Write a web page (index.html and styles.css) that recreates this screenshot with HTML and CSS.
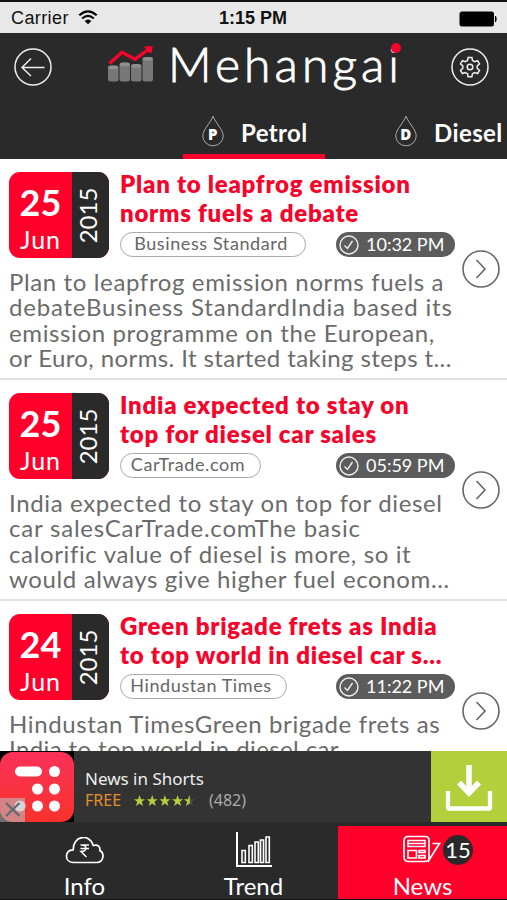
FILE: index.html
```html
<!DOCTYPE html>
<html lang="en">
<head>
    <meta charset="UTF-8">
    <title>Mehangai</title>
    <meta name="viewport" content="width=device-width, initial-scale=1">
    <link rel="stylesheet" href="styles.css">
</head>
<body>
    <div class="status-bar">
        <div class="carrier">
            <span>Carrier</span>
            <svg width="20" height="15" viewBox="0 0 20 15">
                <path d="M1.3 5.2Q10-2.6 18.7 5.2M4.2 8.5Q10 3.4 15.8 8.5" fill="none" stroke="#000" stroke-width="2.2"/>
                <path d="M6.6 10.9Q10 7.9 13.4 10.9L10 14.3Z"/>
            </svg>
        </div>
        <div class="clock">1:15 PM</div>
        <svg class="battery" width="39" height="16" viewBox="0 0 39 16">
            <rect x=".5" y=".5" width="34.5" height="15" rx="2.5"/>
            <path d="M36 5h1q1.5 3 0 6h-1z"/>
        </svg>
    </div>

    <header class="header">
        <div class="title-bar">
            <svg class="round-icon" width="38" height="38" viewBox="0 0 38 38">
                <circle cx="19" cy="19" r="18"/>
                <path d="M30.5 19.5H8M17 10.5L8 19.5L17 28"/>
            </svg>
            <div class="brand">
                <svg width="46" height="37" viewBox="0 0 46 37">
                    <g fill="#777">
                        <rect x="0" y="20.5" width="10.5" height="16" rx="2.5"/>
                        <rect x="11.5" y="17.5" width="10.5" height="19" rx="2.5"/>
                        <rect x="23" y="19" width="10.5" height="17.5" rx="2.5"/>
                        <rect x="34.5" y="12" width="10.5" height="24.5" rx="2.5"/>
                    </g>
                    <g fill="#909090">
                        <ellipse cx="5.25" cy="22.4" rx="5" ry="1.8"/>
                        <ellipse cx="16.75" cy="19.4" rx="5" ry="1.8"/>
                        <ellipse cx="28.25" cy="20.9" rx="5" ry="1.8"/>
                        <ellipse cx="39.75" cy="13.9" rx="5" ry="1.8"/>
                    </g>
                    <path d="M1.5 18.5L14 7.3L27 14.2L41 4" fill="none" stroke="#f5052b" stroke-width="3.4"/>
                    <path d="M36 1.5L44.5 1L44 7.5L41 8Z" fill="#f5052b"/>
                </svg>
                <div class="logo-text">Mehangai</div>
            </div>
            <svg class="round-icon" width="38" height="38" viewBox="0 0 38 38">
                <circle cx="19" cy="19" r="18"/>
                <circle cx="19" cy="19" r="2.8"/>
                <path d="M17.1 9.5h3.8l.6 3 2.2 1.2 2.9-1 1.9 3.2-2.3 2v2.4l2.3 2-1.9 3.2-2.9-1-2.2 1.2-.6 3h-3.8l-.6-3-2.2-1.2-2.9 1-1.9-3.2 2.3-2v-2.4l-2.3-2 1.9-3.2 2.9 1 2.2-1.2z"/>
            </svg>
        </div>
        <nav class="fuel-tabs">
            <div class="fuel-tab active">
                <svg class="drop" width="22" height="32" viewBox="0 0 22 32">
                    <path d="M11 1.2C8.5 8 .8 14.5.8 21A10.2 9.8 0 0 0 21.2 21C21.2 14.5 13.5 8 11 1.2Z"/>
                    <text x="11" y="25">P</text>
                </svg>
                <span>Petrol</span>
            </div>
            <div class="fuel-tab">
                <svg class="drop" width="22" height="32" viewBox="0 0 22 32">
                    <path d="M11 1.2C8.5 8 .8 14.5.8 21A10.2 9.8 0 0 0 21.2 21C21.2 14.5 13.5 8 11 1.2Z"/>
                    <text x="11" y="25">D</text>
                </svg>
                <span>Diesel</span>
            </div>
        </nav>
    </header>

    <main class="news-list">
        <article class="news">
            <div class="news-main">
                <div class="news-head">
                    <div class="date">
                        <div class="day"><b>25</b><span>Jun</span></div>
                        <div class="year"><span>2015</span></div>
                    </div>
                    <div class="news-info">
                        <h2>Plan to leapfrog emission<br>norms fuels a debate</h2>
                        <div class="meta">
                            <span class="source business">Business Standard</span>
                            <span class="time">
                                <svg width="20" height="20" viewBox="0 0 20 20"><circle cx="10" cy="10" r="9"/><path d="M5.5 10.5L8.5 13.5L13.5 6"/></svg>
                                <span>10:32 PM</span>
                            </span>
                        </div>
                    </div>
                </div>
                <p>Plan to leapfrog emission norms fuels a<br><span class="wide">debateBusiness StandardIndia based its</span><br>emission programme on the European,<br><span class="tight">or Euro, norms. It started taking steps t...</span></p>
            </div>
            <svg class="arrow" width="38" height="38" viewBox="0 0 38 38"><circle cx="19" cy="19" r="18"/><path d="M14.5 10L23 19L14.5 28"/></svg>
        </article>

        <article class="news">
            <div class="news-main">
                <div class="news-head">
                    <div class="date">
                        <div class="day"><b>25</b><span>Jun</span></div>
                        <div class="year"><span>2015</span></div>
                    </div>
                    <div class="news-info">
                        <h2>India expected to stay on<br>top for diesel car sales</h2>
                        <div class="meta">
                            <span class="source cartrade">CarTrade.com</span>
                            <span class="time">
                                <svg width="20" height="20" viewBox="0 0 20 20"><circle cx="10" cy="10" r="9"/><path d="M5.5 10.5L8.5 13.5L13.5 6"/></svg>
                                <span>05:59 PM</span>
                            </span>
                        </div>
                    </div>
                </div>
                <p>India expected to stay on top for diesel<br><span class="wide">car salesCarTrade.comThe basic</span><br>calorific value of diesel is more, so it<br>would always give higher fuel econom...</p>
            </div>
            <svg class="arrow" width="38" height="38" viewBox="0 0 38 38"><circle cx="19" cy="19" r="18"/><path d="M14.5 10L23 19L14.5 28"/></svg>
        </article>

        <article class="news">
            <div class="news-main">
                <div class="news-head">
                    <div class="date">
                        <div class="day"><b>24</b><span>Jun</span></div>
                        <div class="year"><span>2015</span></div>
                    </div>
                    <div class="news-info">
                        <h2>Green brigade frets as India<br>to top world in diesel car s...</h2>
                        <div class="meta">
                            <span class="source hindustan">Hindustan Times</span>
                            <span class="time">
                                <svg width="20" height="20" viewBox="0 0 20 20"><circle cx="10" cy="10" r="9"/><path d="M5.5 10.5L8.5 13.5L13.5 6"/></svg>
                                <span>11:22 PM</span>
                            </span>
                        </div>
                    </div>
                </div>
                <p>Hindustan TimesGreen brigade frets as<br><span class="tight">India to top world in diesel car</span></p>
            </div>
            <svg class="arrow" width="38" height="38" viewBox="0 0 38 38"><circle cx="19" cy="19" r="18"/><path d="M14.5 10L23 19L14.5 28"/></svg>
        </article>
    </main>

    <div class="ad">
        <svg width="74" height="71" viewBox="0 0 74 71">
            <defs>
                <linearGradient id="adRed" x1="0" y1="0" x2="0" y2="1">
                    <stop offset="0" stop-color="#fa3159"/>
                    <stop offset="1" stop-color="#f8322b"/>
                </linearGradient>
            </defs>
            <rect width="74" height="71" fill="#000"/>
            <rect x="0" y="1" width="74" height="70" rx="13" fill="url(#adRed)"/>
            <g fill="#fff">
                <rect x="15" y="15.5" width="27" height="10" rx="5"/>
                <circle cx="54.5" cy="20.5" r="5.5"/>
                <circle cx="37.5" cy="38" r="5.5"/>
                <circle cx="54.5" cy="38" r="5.5"/>
                <circle cx="20" cy="55" r="5.5"/>
                <circle cx="37.5" cy="55" r="5.5"/>
                <circle cx="54.5" cy="55" r="5.5"/>
            </g>
            <rect x="0" y="47" width="25" height="24" fill="#bbb" opacity=".6"/>
            <path d="M6 52L19.5 65M19.5 52L6 65" stroke="#5f6b70" stroke-width="2.2"/>
        </svg>
        <div class="ad-text">
            <div class="ad-name">News in Shorts</div>
            <div class="ad-rating">
                <span class="free">FREE</span>
                <svg width="61" height="12" viewBox="0 0 61 12">
                    <defs>
                        <path id="star" d="M5.5 0L7 4.2H11L7.8 6.8L9 11L5.5 8.5L2 11L3.2 6.8L0 4.2H4Z"/>
                        <clipPath id="half"><rect width="5.8" height="12"/></clipPath>
                    </defs>
                    <g fill="#b3cf3c">
                        <use href="#star"/>
                        <use href="#star" x="12.7"/>
                        <use href="#star" x="25.4"/>
                        <use href="#star" x="38.1"/>
                    </g>
                    <use href="#star" x="50" fill="#4b4b4b"/>
                    <g transform="translate(50 0)"><use href="#star" fill="#b3cf3c" clip-path="url(#half)"/></g>
                </svg>
                <span class="count">(482)</span>
            </div>
        </div>
        <div class="download">
            <svg width="48" height="48" viewBox="0 0 48 48" fill="none" stroke="#fff">
                <path d="M24 1V29" stroke-width="5.5"/>
                <path d="M14 18.5L24 29L34 18.5" stroke-width="5.5"/>
                <path d="M3 27V43.5Q3 44.5 4 44.5H44Q45 44.5 45 43.5V27" stroke-width="4.3"/>
            </svg>
        </div>
    </div>

    <nav class="bottom-nav">
        <div class="nav-item">
            <svg width="40" height="28" viewBox="0 0 40 28" fill="none" stroke="#fff" stroke-width="1.7">
                <path d="M8 25.5C-1 25-.5 12.5 8.2 12.8C8-2 25-3.5 28.3 8.5C33 7 35.5 10 34.8 13.5C40 16 38.5 25.5 32 25.5Z"/>
                <path d="M15.5 8H24M15.5 11.5H24M16 8C22.5 7.5 22.5 14.5 16 14.5L21.5 20" stroke-width="1.5"/>
            </svg>
            <span>Info</span>
        </div>
        <div class="nav-item trend">
            <svg width="36" height="36" viewBox="0 0 36 36" fill="none" stroke="#fff" stroke-width="1.6">
                <path d="M1 0V34H36" stroke-width="2"/>
                <path d="M6 30.5V18.5H9.3V30.5ZM13 30.5V13.5H16.3V30.5ZM19 30.5V10H22.3V30.5ZM24.5 30.5V8H27.5V30.5ZM30 30.5V5H33.3V30.5Z"/>
            </svg>
            <span>Trend</span>
        </div>
        <div class="nav-item news-tab">
            <div class="news-icons">
                <svg width="38" height="28" viewBox="0 0 38 28" fill="none" stroke="#fff" stroke-width="1.7">
                    <path d="M26 7V5Q26 1.5 22 1.5H5.5Q1 1.5 1 6V22Q1 26.5 5.5 26.5H21.5Q26 26.5 26.5 23M26 7V25L36.5 8.5H29.5"/>
                    <path d="M5 5.5H22V11.5H5ZM5 8.5H22" stroke-width="1.5"/>
                    <path d="M5 15.5H13.5V23H5ZM16 15.5H22V17.5H16ZM16 20.5H22V23H16Z" stroke-width="1.6"/>
                </svg>
                <div class="count-badge">15</div>
            </div>
            <span>News</span>
        </div>
    </nav>
</body>
</html>
```
FILE: styles.css
```css
* {
    box-sizing: border-box;
}
body {
    display: flex;
    flex-direction: column;
    width: 507px;
    height: 900px;
    margin: 0;
    overflow: hidden;
    font-family: Lato, "Open Sans", sans-serif;
    background: #fff;
}
svg {
    flex: none;
    display: block;
}
.status-bar {
    display: grid;
    grid-template-columns: 1fr 100px 1fr;
    align-items: center;
    height: 33px;
    padding: 2px 9px 0 11px;
    border-top: 2px solid #111;
    background: #e8e8e8;
    color: #111;
    font: 18px "Liberation Sans", sans-serif;
    flex: none;
}
.carrier {
    display: flex;
    align-items: center;
    gap: 9px;
    letter-spacing: 0.4px;
}
.carrier svg {
    margin-top: -3px;
}
.clock {
    margin-left: -3px;
    font-weight: bold;
    text-align: center;
    white-space: nowrap;
}
.battery {
    justify-self: end;
}
.header {
    flex: none;
    height: 126px;
    background: #2a2a2a;
    color: #fff;
}
.title-bar {
    display: flex;
    justify-content: space-between;
    height: 73px;
    padding: 15px 18px 0 14px;
}
.round-icon {
    fill: none;
    stroke: #eee;
    stroke-width: 1.5;
}
.brand {
    display: flex;
    margin: -3px -6px 0 0;
}
.logo-text {
    position: relative;
    width: 233px;
    margin-left: 14px;
    font-size: 48px;
    font-weight: 300;
    letter-spacing: 4.1px;
    line-height: 50px;
    margin-top: -6px;
    white-space: nowrap;
    -webkit-text-stroke: 0.9px #fff;
}
/* red dot over the i */
.logo-text::after {
    content: "";
    position: absolute;
    top: 4px;
    right: 0;
    width: 10px;
    height: 10px;
    border-radius: 50%;
    background: #f5052b;
}
.fuel-tabs {
    display: flex;
    gap: 51px;
    height: 53px;
    padding-left: 183px;
    overflow: hidden;
}
.fuel-tab {
    display: flex;
    gap: 17px;
    width: 142px;
    padding: 9px 0 0 19px;
    font-size: 24px;
    font-weight: bold;
    letter-spacing: 0.4px;
    line-height: 36px;
    flex: none;
}
.fuel-tab.active {
    border-bottom: 5px solid #ff002b;
}
.drop path {
    fill: none;
    stroke: #aaa;
}
.drop text {
    fill: #fff;
    font: 900 15px "Open Sans", sans-serif;
    text-anchor: middle;
}
.news-list {
    flex: 1;
    min-height: 0;
    overflow: hidden;
}
.news {
    display: flex;
    justify-content: space-between;
    height: 221px;
    padding: 13px 7px 0 9px;
    border-bottom: 2px solid #e2e2e2;
}
.news-main {
    width: 446px;
    flex: none;
}
.news-head {
    display: flex;
    gap: 11px;
}
.date {
    display: flex;
    width: 100px;
    height: 86px;
    overflow: hidden;
    border-radius: 11px;
    background: #ff002b;
    color: #fff;
    flex: none;
}
.day {
    display: flex;
    flex-direction: column;
    align-items: center;
    width: 63px;
}
.day b {
    margin-top: 10px;
    font-size: 36px;
    line-height: 40px;
}
.day span {
    margin-top: 3px;
    font-size: 25px;
    letter-spacing: 1px;
    line-height: 28px;
}
.year {
    display: flex;
    align-items: center;
    justify-content: center;
    width: 37px;
    background: #2a2a2a;
    font-size: 24px;
}
.year span {
    transform: rotate(-90deg) translateY(-3px);
}
.news h2 {
    margin: -3px 0 0;
    color: #f5052b;
    font-size: 24px;
    font-weight: 800;
    letter-spacing: 0.75px;
    line-height: 29px;
    white-space: nowrap;
}
.meta {
    display: flex;
    justify-content: space-between;
    width: 335px;
    margin-top: 5px;
}
.source {
    height: 25px;
    border: 1.5px solid #aaa;
    border-radius: 13px;
    color: #666;
    font-size: 18px;
    letter-spacing: 0.6px;
    line-height: 21px;
    text-align: center;
    white-space: nowrap;
}
.business {
    width: 186px;
    padding-right: 4px;
}
.cartrade {
    width: 141px;
    padding-right: 5px;
}
.hindustan {
    width: 167px;
    padding-right: 5px;
}
.time {
    display: flex;
    gap: 7px;
    align-items: center;
    width: 119px;
    height: 25px;
    padding-left: 3px;
    border-radius: 13px;
    background: #5c5c5c;
    color: #fff;
    font-size: 18px;
    line-height: 22px;
    white-space: nowrap;
}
.time > span {
    margin-top: -2px;
}
.time svg {
    fill: none;
    stroke: #eee;
    stroke-width: 1.4;
}
.news p {
    margin: 11px 0 0;
    color: #6b6b6b;
    font-size: 24px;
    letter-spacing: 0.63px;
    line-height: 25.4px;
    white-space: nowrap;
}
.news p .wide {
    letter-spacing: 0.8px;
}
.news p .tight {
    letter-spacing: 0.4px;
}
.arrow {
    margin-top: 78px;
    fill: none;
    stroke: #666;
    stroke-width: 1.6;
}
.ad {
    display: flex;
    height: 71px;
    background: #333;
    flex: none;
}
.ad-text {
    flex: 1;
    padding: 17px 0 0 11px;
    font-family: "Noto Sans", sans-serif;
}
.ad-name {
    color: #eee;
    font-size: 17px;
    line-height: 22px;
}
.ad-rating {
    display: flex;
    align-items: center;
    font-size: 16px;
    line-height: 21px;
}
.free {
    width: 49px;
    color: #e39127;
}
.count {
    margin-left: 14px;
    color: #aaa;
}
.download {
    display: flex;
    justify-content: center;
    width: 76px;
    padding-top: 13px;
    background: #b3cf3c;
}
.bottom-nav {
    display: flex;
    height: 78px;
    padding-top: 4px;
    border-bottom: 1px solid #111;
    background: #2a2a2a;
    color: #fff;
    flex: none;
}
.nav-item {
    display: flex;
    flex-direction: column;
    align-items: center;
    justify-content: space-between;
    width: 169px;
    padding-top: 11px;
    font-size: 24px;
    line-height: 27px;
}
.trend {
    padding-top: 6px;
}
.news-tab {
    background: #ff002b;
    padding-top: 9px;
}
.news-icons {
    display: flex;
    gap: 2px;
    margin-left: 31px;
}
.count-badge {
    width: 30px;
    height: 30px;
    border-radius: 50%;
    background: #2a2a2a;
    font-size: 22px;
    line-height: 29px;
    text-align: center;
}
```
